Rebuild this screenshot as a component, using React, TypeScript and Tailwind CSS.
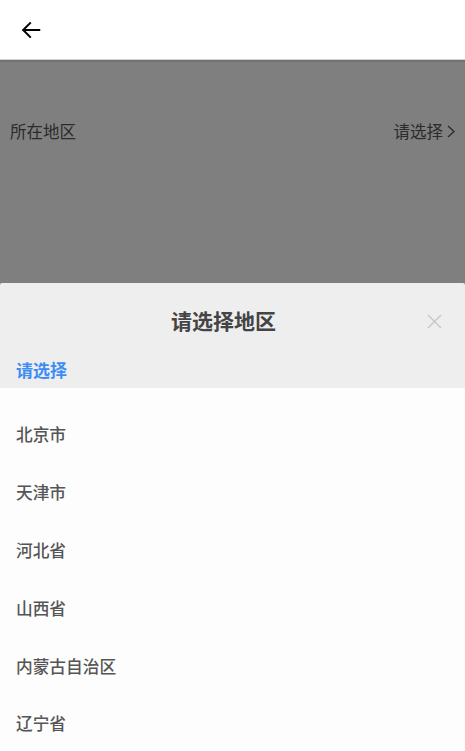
import React from "react";

const provinces = ["北京市", "天津市", "河北省", "山西省", "内蒙古自治区", "辽宁省"];

export default function App() {
  return (
    <div
      className="w-[465px] h-[751px] overflow-hidden flex flex-col bg-[#7f7f7f]"
      style={{ fontFamily: '"Noto Sans CJK SC", "Noto Sans", sans-serif' }}
    >
      <div className="h-[60px] bg-white flex items-center px-[20px] shrink-0 border-b border-[#d0d0d0]">
        <svg width="22" height="22" viewBox="0 0 24 24" fill="none" stroke="#000" strokeWidth="2.2" strokeLinecap="square">
          <path d="M21 12H4" />
          <path d="M11 4.5L3.5 12L11 19.5" />
        </svg>
      </div>
      <div className="h-[223px] shrink-0 bg-[#7f7f7f] border-t-2 border-[#727272] flex flex-col px-[10px] text-[16.5px] text-[#2b2b2b]">
        <div className="h-[138px] flex items-center justify-between">
          <span>所在地区</span>
          <span className="flex items-center gap-[4px]">
            请选择
            <svg width="8" height="13" viewBox="0 0 8 13" fill="none" stroke="#2b2b2b" strokeWidth="1.4">
              <path d="M1 1L7 6.5L1 12" />
            </svg>
          </span>
        </div>
      </div>
      <div className="flex-1 flex flex-col min-h-0">
        <div className="bg-[#eeeeee] h-[105px] shrink-0 flex flex-col rounded-t-[2px]">
          <div className="relative h-[76px] flex items-center justify-center pr-[18px]">
            <span className="text-[21px] font-semibold text-[#444]">请选择地区</span>
            <svg className="absolute right-[23px] top-[31px]" width="15" height="15" viewBox="0 0 15 15" stroke="#c8c8c8" strokeWidth="1.5">
              <path d="M1 1L14 14M14 1L1 14" />
            </svg>
          </div>
          <div className="h-[22px] flex items-center px-[16px] text-[17px] font-semibold text-[#3b8cf5]">请选择</div>
        </div>
        <div className="flex-1 bg-[#fdfdfd] pt-[18px]">
          {provinces.map((p) => (
            <div key={p} className="h-[57.8px] flex items-center px-[16px] text-[16.7px] font-medium text-[#555]">
              {p}
            </div>
          ))}
        </div>
      </div>
    </div>
  );
}
